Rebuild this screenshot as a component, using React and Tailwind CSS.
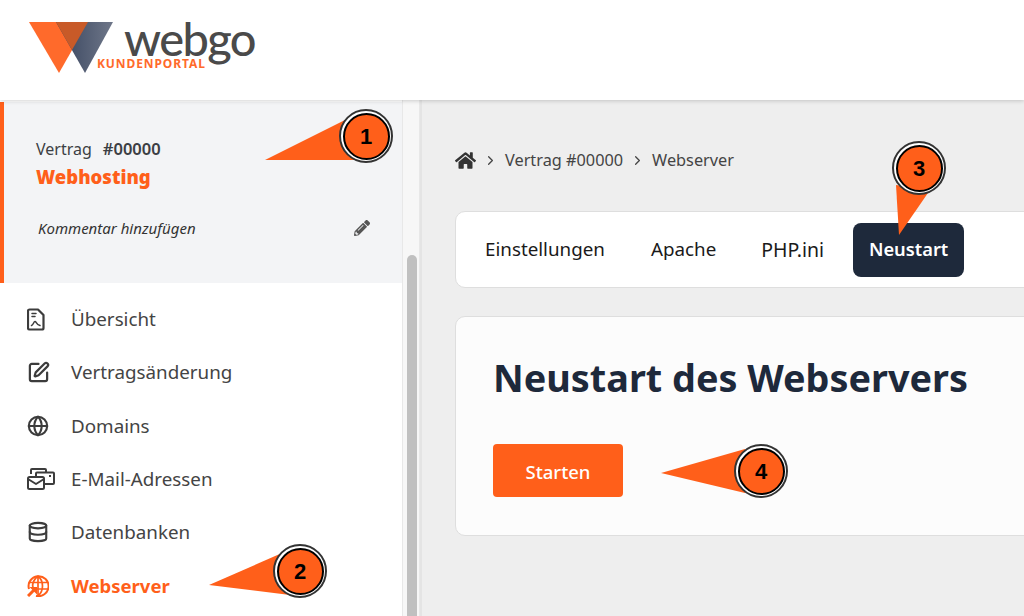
import React from 'react';
import { ChevronRight, Database, Globe, SquarePen } from 'lucide-react';
import { FaHome, FaPencilAlt } from 'react-icons/fa';

const font = { fontFamily: '"Noto Sans", sans-serif' };

const DocIcon = () => (
  <svg width="18" height="23" viewBox="0 0 18 23" fill="none" stroke="#3c3c3c" strokeWidth="2.2" strokeLinejoin="round" strokeLinecap="round">
    <path d="M2.500 1.500h8.500l5.500 5.500v13a1.500 1.500 0 0 1-1.500 1.500H2.500A1.500 1.500 0 0 1 1 20V3a1.500 1.500 0 0 1 1.500-1.500z" />
    <path d="M5 5.500h4M5 8.500h3" strokeWidth="1.500" />
    <path d="M4.500 17.500c2-.5 2-4 3.500-4s1 3 5 4" strokeWidth="1.500" />
  </svg>
);

const MailIcon = () => (
  <svg width="28" height="22" viewBox="0 0 28 22" fill="none" stroke="#3c3c3c" strokeWidth="2" strokeLinejoin="round">
    <path d="M4 6V2a1 1 0 0 1 1-1h13a1 1 0 0 1 1 1v2" />
    <path d="M9 9V5.500a1 1 0 0 1 1-1h16a1 1 0 0 1 1 1V15a1 1 0 0 1-1 1h-8" />
    <rect x="1" y="9" width="16" height="12" rx="1.500" fill="#fff" />
    <path d="M1 11l8 5 8-5" />
    <rect x="22" y="7" width="2" height="2" fill="#3c3c3c" stroke="none" />
  </svg>
);

const WebserverIcon = () => (
  <svg width="22" height="22" viewBox="0 0 22 22" fill="none" stroke="#ff5f1a" strokeWidth="2">
    <path d="M2 14A10 10 0 1 1 9 20.800" />
    <path d="M11 1c-5 4-6 8-5 12M11 1c6 5 6 15 0 20M11 1v20M1.500 7.500h19M8 14h13" strokeWidth="1.700" />
    <path d="M1 21l7-7" strokeWidth="3" />
    <path d="M2.500 12h7.500v7.500z" fill="#ff5f1a" stroke="none" />
  </svg>
);

const navItems = [
  { label: 'Übersicht', icon: <DocIcon /> },
  { label: 'Vertragsänderung', icon: <SquarePen size={23} color="#3c3c3c" strokeWidth={2.3} /> },
  { label: 'Domains', icon: <Globe size={22} color="#3c3c3c" strokeWidth={2.3} /> },
  { label: 'E-Mail-Adressen', icon: <MailIcon /> },
  { label: 'Datenbanken', icon: <Database size={22} color="#3c3c3c" strokeWidth={2.3} /> },
  { label: 'Webserver', icon: <WebserverIcon />, active: true },
];

// Annotation painted over the screenshot: pointer triangle plus numbered circle
const Callout = ({ n, cx, cy, points }) => (
  <>
    <svg className="absolute left-0 top-0 pointer-events-none" width="1024" height="616">
      <polygon points={points} fill="#ff5f1a" />
    </svg>
    <div
      className="absolute flex h-[54px] w-[54px] items-center justify-center rounded-full border-2 border-[#333] bg-white"
      style={{ left: cx - 27, top: cy - 27 }}
    >
      <div className="flex h-[47px] w-[47px] items-center justify-center rounded-full border-2 border-black bg-[#ff5f1a] text-[22px] font-bold text-black" style={{ fontFamily: '"Liberation Sans", sans-serif' }}>
        {n}
      </div>
    </div>
  </>
);

export default function App() {
  return (
    <div className="relative flex h-[616px] w-[1024px] flex-col overflow-hidden bg-[#eeeeee]" style={font}>
      <header className="relative z-10 h-[100px] shrink-0 bg-white shadow-[0_1px_4px_rgba(0,0,0,0.18)]">
        <div className="relative ml-[29px] h-[100px] w-[240px]">
          <svg className="absolute left-0 top-[22px]" width="86" height="52" viewBox="0 0 86 52">
            <defs>
              <linearGradient id="dark" x1="0" x2="1" y1="0" y2="0">
                <stop offset="0" stopColor="#35425c" />
                <stop offset="1" stopColor="#6f7789" />
              </linearGradient>
            </defs>
            <polygon points="0,0 59,0 30,51" fill="#ff6a2b" />
            <polygon points="27,0 84,0 56,51" fill="url(#dark)" />
            <polygon points="27,0 59,0 43,28" fill="#c85a28" />
          </svg>
          <span className="absolute left-[95px] top-[20px] text-[47px] font-medium leading-[36px] tracking-[-1.6px] text-[#4a4a4a]" style={{ fontFamily: 'Lato, sans-serif' }}>
            webgo
          </span>
          <span className="absolute left-[68px] top-[57px] text-[12px] font-bold leading-[14px] tracking-[0.9px] text-[#ff6a2b]">
            KUNDENPORTAL
          </span>
        </div>
      </header>

      <div className="flex min-h-0 flex-1">
        <aside className="flex w-[402px] shrink-0 flex-col bg-white">
          <div className="mt-[2px] h-[181px] shrink-0 border-l-4 border-[#ff5f1a] bg-[#f3f4f6] pl-[32px] pr-[32px] pt-[37px]">
            <div className="flex items-baseline gap-[11px] leading-[20px] text-[#3c3f44]">
              <span className="text-[16px]">Vertrag</span>
              <span className="text-[16.500px] font-semibold">#00000</span>
            </div>
            <div className="mt-[5px] text-[18.500px] font-black leading-[26px] text-[#ff5f1a]">Webhosting</div>
            <div className="mt-[28px] flex items-center justify-between pl-[2px]">
              <span className="text-[15px] italic leading-[20px] text-[#333]">Kommentar hinzufügen</span>
              <FaPencilAlt size={16} color="#555" />
            </div>
          </div>
          <nav className="flex flex-col pt-[9.500px]">
            {navItems.map((item) => (
              <div key={item.label} className="flex h-[53.300px] items-center">
                <div className="flex w-[71px] shrink-0 justify-start pl-[27px]">{item.icon}</div>
                <span className={item.active ? 'text-[18.500px] font-bold text-[#ff5f1a]' : 'text-[18.800px] text-[#444]'}>
                  {item.label}
                </span>
              </div>
            ))}
          </nav>
        </aside>

        {/* scrollbar */}
        <div className="w-[18px] shrink-0 border-x border-[#e8e8e8] bg-[#f7f7f7] pl-[4px] pt-[155px]">
          <div className="h-full w-[10px] rounded-t-full bg-[#c0c0c0]" />
        </div>

        <main className="-mr-[20px] min-w-0 flex-1 border-l-2 border-[#e4e4e4] pl-[33px] pt-[46px]">
          <div className="flex h-[28px] items-center text-[16.300px] text-[#444]">
            <FaHome size={21} color="#333" />
            <ChevronRight size={15} color="#444" className="ml-[7px]" />
            <span className="ml-[7px]">Vertrag #00000</span>
            <ChevronRight size={15} color="#444" className="ml-[7px]" />
            <span className="ml-[7px]">Webserver</span>
          </div>
          <div className="mt-[37px] flex h-[77px] items-center rounded-[10px] border border-[#dedede] bg-white pl-[29px] text-[18.800px] text-[#1a1a1a]">
            <span>Einstellungen</span>
            <span className="ml-[46px]">Apache</span>
            <span className="ml-[45px] text-[19.500px]">PHP.ini</span>
            <span className="ml-[29px] flex h-[54px] w-[111px] items-center justify-center rounded-[8px] bg-[#1e293b] pb-[2px] text-[18.300px] font-semibold text-white">
              Neustart
            </span>
          </div>
          <div className="mt-[28px] h-[220px] rounded-[10px] border border-[#dedede] bg-[#fcfcfc] pl-[37px] pt-[33px]">
            <h1 className="text-[37.800px] font-bold leading-[56px] text-[#1e293b]">Neustart des Webservers</h1>
            <button className="mt-[38px] flex h-[53px] w-[130px] items-center justify-center rounded-[4px] bg-[#ff5f1a] pt-[2px] text-[18.500px] font-medium text-white">
              Starten
            </button>
          </div>
        </main>
      </div>

      <Callout n="1" cx={366} cy={136} points="265,160 345,120 370,160" />
      <Callout n="2" cx={300} cy={571} points="209,585 282,553 290,595" />
      <Callout n="3" cx={919} cy={168} points="899,235 896,185 930,190" />
      <Callout n="4" cx={761} cy={471} points="661,473 745,449 745,493" />
    </div>
  );
}
